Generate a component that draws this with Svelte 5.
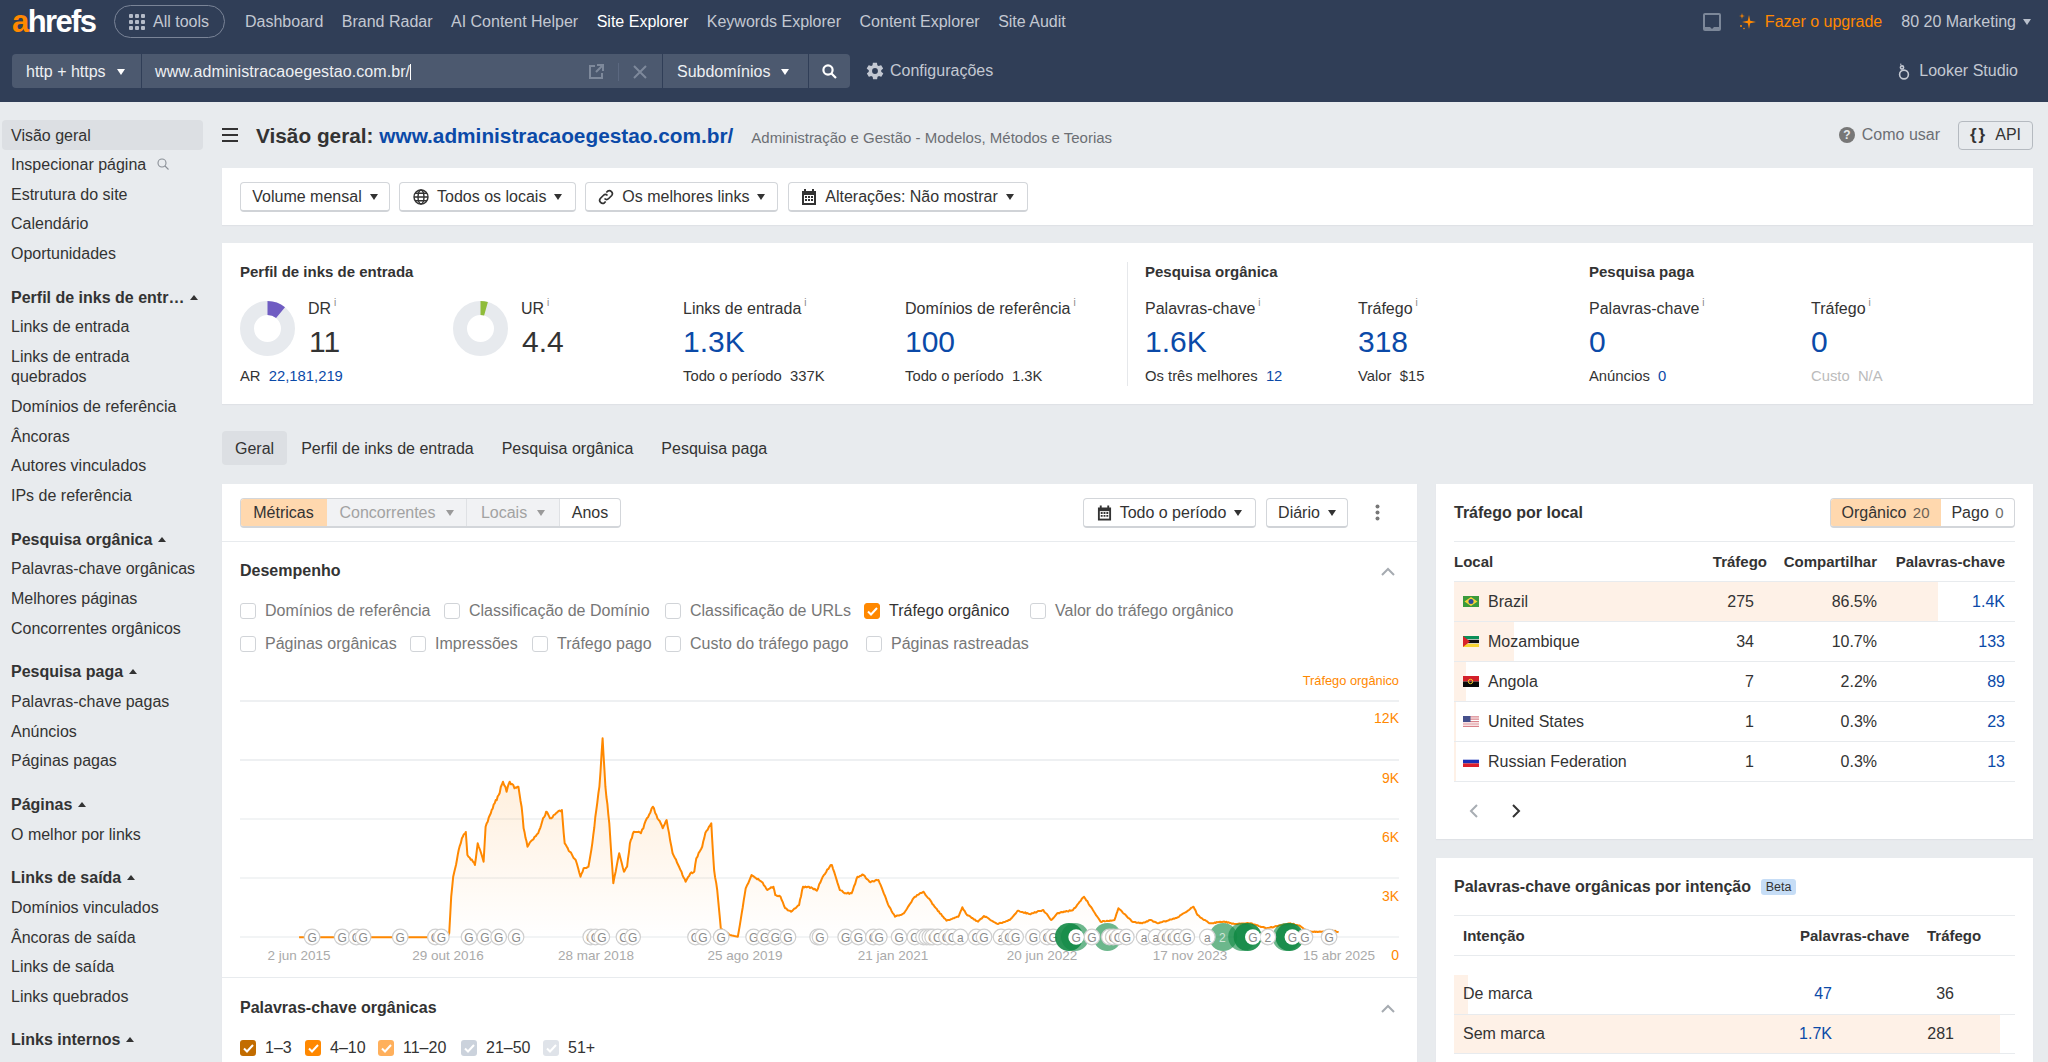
<script>
  const nav = ['Dashboard', 'Brand Radar', 'AI Content Helper', 'Site Explorer', 'Keywords Explorer', 'Content Explorer', 'Site Audit'];

  const sidebar = [
    { items: ['Visão geral', 'Inspecionar página', 'Estrutura do site', 'Calendário', 'Oportunidades'] },
    { head: 'Perfil de inks de entr…', items: ['Links de entrada', 'Links de entrada quebrados', 'Domínios de referência', 'Âncoras', 'Autores vinculados', 'IPs de referência'] },
    { head: 'Pesquisa orgânica', items: ['Palavras-chave orgânicas', 'Melhores páginas', 'Concorrentes orgânicos'] },
    { head: 'Pesquisa paga', items: ['Palavras-chave pagas', 'Anúncios', 'Páginas pagas'] },
    { head: 'Páginas', items: ['O melhor por links'] },
    { head: 'Links de saída', items: ['Domínios vinculados', 'Âncoras de saída', 'Links de saída', 'Links quebrados'] },
    { head: 'Links internos', items: [] }
  ];

  const row1 = [
    { t: 'Domínios de referência', w: 204 },
    { t: 'Classificação de Domínio', w: 221 },
    { t: 'Classificação de URLs', w: 199 },
    { t: 'Tráfego orgânico', w: 166, on: true },
    { t: 'Valor do tráfego orgânico', w: 220 }
  ];
  const row2 = [
    { t: 'Páginas orgânicas', w: 170 },
    { t: 'Impressões', w: 122 },
    { t: 'Tráfego pago', w: 133 },
    { t: 'Custo do tráfego pago', w: 201 },
    { t: 'Páginas rastreadas', w: 170 }
  ];
  const kw = [
    { t: '1–3', c: '#c26c00', w: 65 },
    { t: '4–10', c: '#ff8800', w: 73 },
    { t: '11–20', c: '#ffb05c', w: 83 },
    { t: '21–50', c: '#cbd2dc', w: 82 },
    { t: '51+', c: '#dfe3e9', w: 60 }
  ];

  const places = [
    { n: 'Brazil', f: 'br', tr: '275', s: '86.5%', k: '1.4K', bar: 484 },
    { n: 'Mozambique', f: 'mz', tr: '34', s: '10.7%', k: '133', bar: 60 },
    { n: 'Angola', f: 'ao', tr: '7', s: '2.2%', k: '89', bar: 12 },
    { n: 'United States', f: 'us', tr: '1', s: '0.3%', k: '23', bar: 2 },
    { n: 'Russian Federation', f: 'ru', tr: '1', s: '0.3%', k: '13', bar: 2 }
  ];

  const z7 = [[200,772],[575,772],[580,760],[585,650],[590,590],[597,555],[604,510],[612,475],[622,456],[626,525],[640,545],[645,555],[652,490],[658,510],[667,545],[672,440],[685,400],[695,370],[705,345],[716,305],[725,335],[733,305],[745,325],[755,320],[763,380],[768,445],[778,500],[790,480],[805,460],[815,425],[825,395],[835,415],[850,400],[865,390],[872,490],[885,515],[900,540],[912,590],[920,565],[932,560],[942,490],[952,390],[960,320],[968,175],[975,320],[985,430],[995,610],[1010,520],[1022,575],[1030,560],[1037,490],[1047,455],[1065,460],[1080,415],[1095,380],[1110,420],[1120,445],[1130,420],[1145,520],[1165,570],[1178,605],[1190,580],[1200,575],[1205,535],[1220,500],[1228,458],[1243,430],[1250,570],[1258,630],[1267,745],[1290,765],[1310,770],[1320,700],[1330,625],[1345,585],[1370,605],[1385,630],[1400,620],[1405,645],[1418,650],[1430,685],[1445,695],[1465,675],[1475,620],[1490,620],[1510,632],[1525,590],[1545,555]];
  const z8 = [[30,555],[50,630],[65,640],[80,640],[95,590],[110,585],[125,605],[148,600],[175,680],[190,710],[212,700],[240,650],[262,635],[290,680],[320,722],[350,710],[360,682],[372,705],[400,725],[415,708],[450,732],[480,720],[500,692],[530,702],[565,690],[585,720],[600,700],[640,690],[668,650],[685,680],[710,725],[745,720],[755,685],[790,725],[815,730],[835,720],[855,730],[905,712],[945,680],[955,705],[985,730],[1020,725],[1050,732],[1090,730],[1130,745],[1150,740],[1190,730],[1215,738],[1235,755],[1270,755],[1295,750],[1312,757]];
  const base = [
    ...z7.map(([x, y]) => [220 + x / 2.53, 680 + y / 3]),
    ...z8.map(([x, y]) => [820 + x / 2.53, 680 + y / 3])
  ];

  let seed = 12345;
  const rnd = () => {
    seed = (seed * 1664525 + 1013904223) >>> 0;
    return seed / 4294967296 - 0.5;
  };
  const pts = [];
  for (let i = 0; i < base.length - 1; i++) {
    const [x0, y0] = base[i];
    const [x1, y1] = base[i + 1];
    const n = Math.max(1, Math.round((x1 - x0) / 1.1));
    for (let j = 0; j < n; j++) {
      const t = j / n;
      const y = y0 + (y1 - y0) * t;
      const amp = y > 934 ? 0 : Math.min(3.4, 0.7 + (937 - y) / 60);
      pts.push([x0 + (x1 - x0) * t, y + (j === 0 ? 0 : rnd() * amp)]);
    }
  }
  pts.push(base[base.length - 1]);
  const line = pts.map((p, i) => `${i ? 'L' : 'M'}${p[0].toFixed(1)} ${p[1].toFixed(1)}`).join('');
  const area = `${line}L${pts[pts.length - 1][0].toFixed(1)} 937L${pts[0][0].toFixed(1)} 937Z`;

  const g = (list, off) => list.map((v) => (Array.isArray(v) ? { x: off + v[0] / 2.53, l: v[1] } : { x: off + v / 2.53, l: 'G' }));
  const marks = g([233, 309, 345, 362, 456, 545, 560, 630, 670, 705, 749, 938, 950, 966, 1022, 1044, 1203, 1222, 1268, 1350, 1378, 1405, 1437, 1512], 220);
  const marks2 = g([0, 65, 97, 135, 150, 200, 240, 262, 270, 278, 285, 298, 320, 335, [355, 'a'], 395, 415, [458, 'a'], 478, 495, 540, 575, 590], 820);
  const marksTop = g([688, 732, 742, 755, 775, [820, 'a'], [850, 'a'], 875, 890, 905, 928, [980, 'a'], [1133, '2'], 1227, 1288], 820);
  const greens = [
    [645, 0.62], [630, 0.9], [727, 0.62], [1020, 0.62], [1068, 0.62], [1082, 0.9], [1180, 0.62], [1188, 0.9]
  ].map(([z, o]) => ({ x: 820 + z / 2.53, o }));
  const whites = [[648, 'G'], [1095, 'G'], [1195, 'G']].map(([z, l]) => ({ x: 820 + z / 2.53, l }));
  const onGreen = 820 + 1018 / 2.53;

  const grid = [[701, 2], [760, 2], [819, 1.4], [878, 1.4], [937, 1.4]];
  const yl = [['12K', 723], ['9K', 783], ['6K', 842], ['3K', 901], ['0', 960]];
  const dates = [['2 jun 2015', 299], ['29 out 2016', 448], ['28 mar 2018', 596], ['25 ago 2019', 745], ['21 jan 2021', 893], ['20 jun 2022', 1042], ['17 nov 2023', 1190], ['15 abr 2025', 1339]];
</script>

<div class="page">
  <header class="top">
    <div class="row-a">
      <div class="logo"><span class="a">a</span>hrefs</div>
      <div class="pill">
        <svg width="16" height="16" viewBox="0 0 16 16" fill="#b4bbc8"><rect x="0" y="0" width="4" height="4" rx="1"/><rect x="6" y="0" width="4" height="4" rx="1"/><rect x="12" y="0" width="4" height="4" rx="1"/><rect x="0" y="6" width="4" height="4" rx="1"/><rect x="6" y="6" width="4" height="4" rx="1"/><rect x="12" y="6" width="4" height="4" rx="1"/><rect x="0" y="12" width="4" height="4" rx="1"/><rect x="6" y="12" width="4" height="4" rx="1"/><rect x="12" y="12" width="4" height="4" rx="1"/></svg>
        <span>All tools</span>
      </div>
      <nav class="nav">
        {#each nav as n}
          <span class:active={n === 'Site Explorer'}>{n}</span>
        {/each}
      </nav>
      <div class="right-a">
        <svg width="18" height="18" viewBox="0 0 18 18"><rect x="0" y="0" width="18" height="18" rx="2" fill="#7c8799"/><rect x="2" y="2" width="14" height="12" fill="#303e57"/><path d="M7 14h4l-2 2z" fill="#303e57"/></svg>
        <span class="up">
          <svg width="17" height="17" viewBox="0 0 17 17" fill="#ff8800"><path d="M10 2l1.2 5.8L17 9l-5.8 1.2L10 16l-1.2-5.8L3 9l5.8-1.2z"/><path d="M3 0l.6 2.4L6 3l-2.4.6L3 6l-.6-2.4L0 3l2.4-.6z"/><circle cx="2" cy="13" r="1"/><circle cx="5" cy="15.5" r=".8"/></svg>
          Fazer o upgrade
        </span>
        <span class="acct">80 20 Marketing</span><i class="caret light"></i>
      </div>
    </div>
    <div class="row-b">
      <div class="search">
        <div class="seg s1">http + https <i class="caret white"></i></div>
        <div class="seg s2">
          <span class="url">www.administracaoegestao.com.br/<b class="cur"></b></span>
          <svg class="ext" width="15" height="15" viewBox="0 0 15 15" fill="none" stroke="#7e899b" stroke-width="2"><path d="M6 2H1v12h12V9"/><path d="M8 1h6v6M14 1L7 8"/></svg>
          <i class="sep"></i>
          <svg class="x" width="14" height="14" viewBox="0 0 14 14" stroke="#7e899b" stroke-width="2"><path d="M1 1l12 12M13 1L1 13"/></svg>
        </div>
        <div class="seg s3">Subdomínios <i class="caret white"></i></div>
        <div class="seg s4">
          <svg width="15" height="15" viewBox="0 0 15 15" fill="none" stroke="#fff" stroke-width="2.2"><circle cx="6" cy="6" r="4.6"/><path d="M9.5 9.5L14 14"/></svg>
        </div>
      </div>
      <div class="config">
        <svg width="20" height="20" viewBox="0 0 24 24" fill="#c3c8d2"><path d="M19.4 13c.1-.3.1-.7.1-1s0-.7-.1-1l2.1-1.6c.2-.2.2-.4.1-.6l-2-3.5c-.1-.2-.4-.3-.6-.2l-2.5 1c-.5-.4-1.1-.7-1.7-1l-.4-2.7c0-.2-.2-.4-.5-.4h-4c-.3 0-.5.2-.5.4l-.4 2.7c-.6.3-1.2.6-1.7 1l-2.5-1c-.2-.1-.5 0-.6.2l-2 3.5c-.1.2-.1.4.1.6L4.6 11c-.1.3-.1.7-.1 1s0 .7.1 1l-2.1 1.6c-.2.2-.2.4-.1.6l2 3.5c.1.2.4.3.6.2l2.5-1c.5.4 1.1.7 1.7 1l.4 2.7c0 .2.2.4.5.4h4c.3 0 .5-.2.5-.4l.4-2.7c.6-.3 1.2-.6 1.7-1l2.5 1c.2.1.5 0 .6-.2l2-3.5c.1-.2.1-.4-.1-.6zM12 15.5a3.5 3.5 0 110-7 3.5 3.5 0 010 7z"/></svg>
        <span>Configurações</span>
      </div>
      <div class="looker">
        <svg width="12" height="17" viewBox="0 0 12 17" fill="none" stroke="#c3c8d2" stroke-width="1.6"><circle cx="6" cy="11.5" r="4.4"/><circle cx="4" cy="4.5" r="1.6"/><circle cx="2.8" cy="1.2" r=".7" fill="#c3c8d2" stroke="none"/></svg>
        <span>Looker Studio</span>
      </div>
    </div>
  </header>

  <div class="body">
    <aside class="side">
      {#each sidebar as group}
        <div class="group">
          {#if group.head}
            <div class="side-head"><span>{group.head}</span><i class="caret up-c"></i></div>
          {/if}
          {#each group.items as item}
            <div class="side-item" class:on={item === 'Visão geral'} class:wrap={item === 'Links de entrada quebrados'}>
              {item}
              {#if item === 'Inspecionar página'}
                <svg width="12" height="12" viewBox="0 0 12 12" fill="none" stroke="#8a8f96" stroke-width="1.1"><circle cx="5" cy="5" r="4"/><path d="M8 8l3.5 3.5"/></svg>
              {/if}
            </div>
          {/each}
        </div>
      {/each}
    </aside>

    <main class="main">
      <div class="title-row">
        <svg class="burger" width="16" height="14" viewBox="0 0 16 14" fill="#333"><rect width="16" height="2"/><rect y="6" width="16" height="2"/><rect y="12" width="16" height="2"/></svg>
        <h1>Visão geral: <span>www.administracaoegestao.com.br/</span></h1>
        <span class="subtitle">Administração e Gestão - Modelos, Métodos e Teorias</span>
        <span class="howto">
          <svg width="16" height="16" viewBox="0 0 16 16"><circle cx="8" cy="8" r="8" fill="#777"/><text x="8" y="12" text-anchor="middle" font-size="12" font-weight="700" fill="#e8ebee" font-family="Liberation Sans">?</text></svg>
          Como usar
        </span>
        <span class="api"><b>{'{}'}</b> API</span>
      </div>

      <section class="panel filters">
        <button class="btn w150">Volume mensal <i class="caret"></i></button>
        <button class="btn w177">
          <svg width="16" height="16" viewBox="0 0 16 16" fill="none" stroke="#333" stroke-width="1.4"><circle cx="8" cy="8" r="7"/><ellipse cx="8" cy="8" rx="3" ry="7"/><path d="M1 8h14M2 4.2h12M2 11.8h12"/></svg>
          Todos os locais <i class="caret"></i>
        </button>
        <button class="btn w193">
          <svg width="16" height="16" viewBox="0 0 16 16" fill="none" stroke="#333" stroke-width="1.7"><path d="M6.5 9.5a3 3 0 004.2 0l3-3a3 3 0 00-4.2-4.2L8.3 3.5"/><path d="M9.5 6.5a3 3 0 00-4.2 0l-3 3a3 3 0 004.2 4.2l1.2-1.2"/></svg>
          Os melhores links <i class="caret"></i>
        </button>
        <button class="btn w240">
          <svg width="16" height="16" viewBox="0 0 16 16"><path fill="#333" d="M1 2h2V0h2v2h6V0h2v2h2v14H1z"/><path fill="#fff" d="M3 6h10v8H3z"/><path fill="#333" d="M4 7h2v2H4zM7 7h2v2H7zM10 7h2v2h-2zM4 10h2v2H4zM7 10h2v2H7zM10 10h2v2h-2z"/></svg>
          Alterações: Não mostrar <i class="caret"></i>
        </button>
      </section>

      <section class="panel stats">
        <div class="sec sec1">
          <h3>Perfil de inks de entrada</h3>
          <div class="metrics">
            <div class="m donut-m" style="width:213px">
              <svg class="donut" width="55" height="55" viewBox="0 0 55 55"><circle cx="27.5" cy="27.5" r="20.5" fill="none" stroke="#e7eaee" stroke-width="14"/><circle cx="27.5" cy="27.5" r="20.5" fill="none" stroke="#6f5cc2" stroke-width="14" pathLength="100" stroke-dasharray="11 89" transform="rotate(-90 27.5 27.5)"/></svg>
              <div>
                <div class="lab">DR<sup>i</sup></div>
                <div class="val dark">11</div>
              </div>
              <div class="sub full">AR&nbsp; <a>22,181,219</a></div>
            </div>
            <div class="m donut-m" style="width:230px">
              <svg class="donut" width="55" height="55" viewBox="0 0 55 55"><circle cx="27.5" cy="27.5" r="20.5" fill="none" stroke="#e7eaee" stroke-width="14"/><circle cx="27.5" cy="27.5" r="20.5" fill="none" stroke="#8fbc3a" stroke-width="14" pathLength="100" stroke-dasharray="4.4 95.6" transform="rotate(-90 27.5 27.5)"/></svg>
              <div>
                <div class="lab">UR<sup>i</sup></div>
                <div class="val dark">4.4</div>
              </div>
            </div>
            <div class="m" style="width:222px">
              <div class="lab">Links de entrada<sup>i</sup></div>
              <div class="val">1.3K</div>
              <div class="sub">Todo o período&nbsp; 337K</div>
            </div>
            <div class="m">
              <div class="lab">Domínios de referência<sup>i</sup></div>
              <div class="val">100</div>
              <div class="sub">Todo o período&nbsp; 1.3K</div>
            </div>
          </div>
        </div>
        <div class="sec sec2">
          <h3>Pesquisa orgânica</h3>
          <div class="metrics">
            <div class="m" style="width:213px">
              <div class="lab">Palavras-chave<sup>i</sup></div>
              <div class="val">1.6K</div>
              <div class="sub">Os três melhores&nbsp; <a>12</a></div>
            </div>
            <div class="m">
              <div class="lab">Tráfego<sup>i</sup></div>
              <div class="val">318</div>
              <div class="sub">Valor&nbsp; $15</div>
            </div>
          </div>
        </div>
        <div class="sec sec3">
          <h3>Pesquisa paga</h3>
          <div class="metrics">
            <div class="m" style="width:222px">
              <div class="lab">Palavras-chave<sup>i</sup></div>
              <div class="val">0</div>
              <div class="sub">Anúncios&nbsp; <a>0</a></div>
            </div>
            <div class="m">
              <div class="lab">Tráfego<sup>i</sup></div>
              <div class="val">0</div>
              <div class="sub muted">Custo&nbsp; N/A</div>
            </div>
          </div>
        </div>
      </section>

      <div class="tabs">
        <span class="tab on">Geral</span>
        <span class="tab">Perfil de inks de entrada</span>
        <span class="tab">Pesquisa orgânica</span>
        <span class="tab">Pesquisa paga</span>
      </div>

      <div class="cols">
        <section class="card left">
          <div class="toolbar">
            <div class="segm">
              <span class="chip sel" style="width:86px">Métricas</span>
              <span class="chip dis" style="width:140px">Concorrentes <i class="caret gray"></i></span>
              <span class="chip dis" style="width:93px">Locais <i class="caret gray"></i></span>
              <span class="chip" style="width:60px">Anos</span>
            </div>
            <div class="tool-right">
              <button class="btn t1">
                <svg width="15" height="16" viewBox="0 0 16 16"><path fill="#333" d="M1 2h2V0h2v2h6V0h2v2h2v14H1z"/><path fill="#fff" d="M3 6h10v8H3z"/><path fill="#333" d="M4 7h2v2H4zM7 7h2v2H7zM10 7h2v2h-2zM4 10h2v2H4zM7 10h2v2H7zM10 10h2v2h-2z"/></svg>
                Todo o período <i class="caret"></i>
              </button>
              <button class="btn t2">Diário <i class="caret"></i></button>
              <svg class="dots" width="5" height="17" viewBox="0 0 5 17" fill="#777"><circle cx="2.5" cy="2.5" r="2"/><circle cx="2.5" cy="8.5" r="2"/><circle cx="2.5" cy="14.5" r="2"/></svg>
            </div>
          </div>
          <div class="perf">
            <div class="sect-head">
              <h3 class="big">Desempenho</h3>
              <svg width="14" height="9" viewBox="0 0 14 9" fill="none" stroke="#a6abb1" stroke-width="2"><path d="M1 8l6-6 6 6"/></svg>
            </div>
            <div class="cb-row r1">
              {#each row1 as c}
                <label class="cb" style="width:{c.w}px" class:on={c.on}>
                  <span class="box" class:checked={c.on}>{#if c.on}<svg width="11" height="9" viewBox="0 0 11 9" fill="none" stroke="#fff" stroke-width="2"><path d="M1 4.5l3 3 6-6.5"/></svg>{/if}</span>
                  {c.t}
                </label>
              {/each}
            </div>
            <div class="cb-row r2">
              {#each row2 as c}
                <label class="cb" style="width:{c.w}px">
                  <span class="box"></span>
                  {c.t}
                </label>
              {/each}
            </div>
            <svg class="chart" width="1195" height="310" viewBox="222 668 1195 310">
              <defs>
                <linearGradient id="fade" gradientUnits="userSpaceOnUse" x1="0" y1="735" x2="0" y2="937">
                  <stop offset="0" stop-color="#ff8800" stop-opacity=".17"/>
                  <stop offset="1" stop-color="#ff8800" stop-opacity="0"/>
                </linearGradient>
              </defs>
              <text x="1399" y="685" text-anchor="end" class="ylab small">Tráfego orgânico</text>
              {#each grid as [y, w]}
                <line x1="240" x2="1399" y1={y} y2={y} stroke="#eef0f2" stroke-width={w}/>
              {/each}
              <path d={area} fill="url(#fade)"/>
              <path d={line} fill="none" stroke="#ff8800" stroke-width="2" stroke-linejoin="round"/>
              {#each yl as [t, y]}
                <text x="1399" y={y} text-anchor="end" class="ylab">{t}</text>
              {/each}
              {#each dates as [t, x]}
                <text x={x} y="960" text-anchor="middle" class="dlab">{t}</text>
              {/each}
              {#each [...marks, ...marks2] as m}
                <circle cx={m.x} cy="937" r="7.8" fill="#fff" stroke="#cfcfcf" stroke-width="1.2"/>
                <text x={m.x} y="941.5" text-anchor="middle" class="mk">{m.l}</text>
              {/each}
              {#each greens as c}
                <circle cx={c.x} cy="937" r="14" fill="#128a45" opacity={c.o}/>
              {/each}
              <text x={onGreen} y="941.5" text-anchor="middle" class="mk mk2">2</text>
              {#each marksTop as m}
                <circle cx={m.x} cy="937" r="7.8" fill="#fff" stroke="#cfcfcf" stroke-width="1.2"/>
                <text x={m.x} y="941.5" text-anchor="middle" class="mk">{m.l}</text>
              {/each}
              {#each whites as w}
                <circle cx={w.x} cy="937" r="7.8" fill="#fff"/>
                <text x={w.x} y="941.5" text-anchor="middle" class="mk">{w.l}</text>
              {/each}
            </svg>
          </div>
          <div class="kw-sec">
            <div class="sect-head kwh">
              <h3 class="big">Palavras-chave orgânicas</h3>
              <svg width="14" height="9" viewBox="0 0 14 9" fill="none" stroke="#a6abb1" stroke-width="2"><path d="M1 8l6-6 6 6"/></svg>
            </div>
            <div class="kw-row">
              {#each kw as k}
                <span class="kwi" style="width:{k.w}px">
                  <span class="box fill" style="background:{k.c}"><svg width="11" height="9" viewBox="0 0 11 9" fill="none" stroke="#fff" stroke-width="2"><path d="M1 4.5l3 3 6-6.5"/></svg></span>
                  {k.t}
                </span>
              {/each}
            </div>
          </div>
        </section>

        <div class="right">
          <section class="card places">
            <div class="card-head">
              <h3 class="big">Tráfego por local</h3>
              <div class="segm">
                <span class="chip sel" style="width:110px">Orgânico&nbsp;<em>20</em></span>
                <span class="chip" style="width:73px">Pago&nbsp;<em>0</em></span>
              </div>
            </div>
            <div class="tbl">
              <div class="tr th">
                <span>Local</span>
                <span class="r shift">Tráfego</span>
                <span class="r">Compartilhar</span>
                <span class="r">Palavras-chave</span>
              </div>
              {#each places as p}
                <div class="tr td">
                  <i class="bar" style="width:{p.bar}px"></i>
                  <span class="name">
                    <svg class="flag" width="16" height="11" viewBox="0 0 16 11">
                      {#if p.f === 'br'}
                        <rect width="16" height="11" fill="#3a9a3c"/><path d="M8 1l6.5 4.5L8 10 1.5 5.5z" fill="#f5d33a"/><circle cx="8" cy="5.5" r="2.5" fill="#2a4d9a"/>
                      {:else if p.f === 'mz'}
                        <rect width="16" height="3.4" fill="#0a8f58"/><rect y="3.4" width="16" height="4.2" fill="#111"/><rect y="7.6" width="16" height="3.4" fill="#f7d432"/><rect y="3" width="16" height=".6" fill="#fff"/><rect y="7.4" width="16" height=".6" fill="#fff"/><path d="M0 0l7 5.5L0 11z" fill="#d8232a"/>
                      {:else if p.f === 'ao'}
                        <rect width="16" height="5.5" fill="#d3202a"/><rect y="5.5" width="16" height="5.5" fill="#0a0a0a"/><circle cx="7.5" cy="5.5" r="2.2" fill="none" stroke="#f5cf2e" stroke-width="1"/>
                      {:else if p.f === 'us'}
                        <rect width="16" height="11" fill="#fff"/><path d="M0 .8h16M0 3.2h16M0 5.6h16M0 8h16M0 10.4h16" stroke="#d9828a" stroke-width="1.2"/><rect width="7.5" height="6" fill="#45508c"/>
                      {:else}
                        <rect width="16" height="3.7" fill="#fff"/><rect y="3.7" width="16" height="3.7" fill="#1a2fb5"/><rect y="7.4" width="16" height="3.6" fill="#dc1f2b"/>
                      {/if}
                    </svg>
                    {p.n}
                  </span>
                  <span class="r">{p.tr}</span>
                  <span class="r">{p.s}</span>
                  <span class="r blue">{p.k}</span>
                </div>
              {/each}
            </div>
            <div class="pager">
              <svg width="10" height="14" viewBox="0 0 10 14" fill="none" stroke="#a8adb3" stroke-width="2"><path d="M8 1L2 7l6 6"/></svg>
              <svg width="10" height="14" viewBox="0 0 10 14" fill="none" stroke="#333" stroke-width="2"><path d="M2 1l6 6-6 6"/></svg>
            </div>
          </section>

          <section class="card intent">
            <div class="int-head">
              <h3 class="big">Palavras-chave orgânicas por intenção</h3>
              <span class="beta">Beta</span>
            </div>
            <div class="int-tbl">
              <div class="ir ih"><span>Intenção</span><span class="c1">Palavras-chave</span><span class="c2">Tráfego</span></div>
              <div class="ir id first"><i class="bar" style="width:14px"></i><span>De marca</span><span class="c1 blue">47</span><span class="c2">36</span></div>
              <div class="ir id"><i class="bar" style="width:546px"></i><span>Sem marca</span><span class="c1 blue">1.7K</span><span class="c2">281</span></div>
            </div>
          </section>
        </div>
      </div>
    </main>
  </div>
</div>

<style>
  :global(body) {
    margin: 0;
    background: #e8ebee;
  }
  .page {
    width: 2048px;
    height: 1062px;
    overflow: hidden;
    font-family: "Liberation Sans", Arial, sans-serif;
    font-size: 16px;
    color: #333;
    background: #e8ebee;
  }
  i { font-style: normal; }
  em { font-style: normal; opacity: .72; font-size: 15px; }
  a { color: #0b4aa8; }

  .caret {
    display: inline-block;
    width: 0;
    height: 0;
    border-left: 4.5px solid transparent;
    border-right: 4.5px solid transparent;
    border-top: 6px solid #333;
    margin-left: 4px;
    vertical-align: 2px;
  }
  .caret.white { border-top-color: #fff; }
  .caret.light { border-top-color: #b9c0cc; margin-left: 7px; }
  .caret.gray { border-top-color: #9a9a9a; }
  .caret.up-c {
    border-top: 0;
    border-bottom: 5px solid #333;
    margin-left: 6px;
    vertical-align: 3px;
  }

  /* header */
  .top {
    height: 102px;
    background: #303e57;
    color: #c3c8d2;
    box-sizing: border-box;
  }
  .row-a {
    display: flex;
    align-items: center;
    height: 43px;
    padding-left: 12px;
  }
  .logo {
    width: 83px;
    font-size: 31px;
    font-weight: 700;
    letter-spacing: -1.6px;
    color: #fff;
    line-height: 40px;
  }
  .logo .a { color: #ff8800; }
  .pill {
    display: flex;
    align-items: center;
    gap: 8px;
    width: 111px;
    height: 33px;
    box-sizing: border-box;
    margin-left: 19px;
    padding-left: 14px;
    border: 1px solid #7a8497;
    border-radius: 17px;
  }
  .nav {
    display: flex;
    gap: 18.5px;
    margin-left: 20px;
  }
  .nav .active { color: #fff; }
  .right-a {
    display: flex;
    align-items: center;
    margin-left: auto;
    padding-right: 17px;
  }
  .up {
    display: flex;
    align-items: center;
    gap: 9px;
    color: #ff8800;
    margin-left: 18px;
  }
  .acct { margin-left: 19px; }
  .row-b {
    display: flex;
    align-items: center;
    margin-top: 11px;
    padding-left: 12px;
    padding-right: 30px;
  }
  .search {
    display: flex;
    gap: 1px;
    height: 34px;
    width: 838px;
    border-radius: 4px;
    overflow: hidden;
  }
  .seg {
    display: flex;
    align-items: center;
    background: #4c596f;
    color: #eef0f3;
    box-sizing: border-box;
    padding-top: 1px;
  }
  .s1 { width: 129px; padding-left: 14px; gap: 2px; }
  .s1 .caret { margin-left: 9px; }
  .s3 .caret { margin-left: 11px; }
  .s2 { width: 520px; padding-left: 13px; }
  .url { flex: 1; display: flex; align-items: center; letter-spacing: .08px; }
  .cur { display: inline-block; width: 1px; height: 16px; background: #fff; }
  .sep { width: 1px; height: 18px; background: #5b6880; margin: 0 14px; }
  .x { margin-right: 15px; }
  .s3 { width: 145px; padding-left: 14px; }
  .s4 { flex: 1; justify-content: center; }
  .config {
    display: flex;
    align-items: center;
    gap: 5px;
    margin-left: 15px;
  }
  .looker {
    display: flex;
    align-items: center;
    gap: 9px;
    margin-left: auto;
  }

  /* layout */
  .body {
    display: grid;
    grid-template-columns: 222px 1811px;
  }
  .side {
    padding: 18px 0 0 2px;
  }
  .group + .group { margin-top: 14px; }
  .side-item, .side-head {
    padding: 5.5px 9px 3.9px;
    line-height: 20.27px;
    width: 201px;
    box-sizing: border-box;
    white-space: nowrap;
  }
  .side-item.wrap { white-space: normal; }
  .side-item.on {
    background: #dcdfe3;
    border-radius: 4px;
  }
  .side-item svg { margin-left: 6px; vertical-align: 0; }
  .side-head {
    font-weight: 700;
  }

  .title-row {
    display: flex;
    align-items: center;
    height: 30px;
    margin-top: 18px;
    margin-bottom: 18px;
  }
  .burger { flex: none; }
  h1 {
    margin: 2px 0 0 18px;
    font-size: 20.8px;
    font-weight: 700;
    white-space: nowrap;
  }
  h1 span { color: #0b4aa8; }
  .subtitle {
    margin-left: 18px;
    margin-top: 5px;
    font-size: 15px;
    color: #6c6f74;
  }
  .howto {
    display: flex;
    align-items: center;
    gap: 7px;
    margin-left: auto;
    color: #6c6f74;
  }
  .api {
    width: 75px;
    height: 29px;
    box-sizing: border-box;
    margin-left: 18px;
    border: 1px solid #b5bac0;
    border-radius: 4px;
    display: flex;
    align-items: center;
    justify-content: center;
    gap: 8px;
  }
  .api b { font-size: 17px; letter-spacing: 2px; }

  .panel {
    background: #fff;
    box-shadow: 0 1px 1px #dfe2e6;
  }
  .filters {
    display: flex;
    gap: 9.2px;
    align-items: center;
    height: 57px;
    padding-left: 18px;
    margin-bottom: 18px;
  }
  .btn {
    display: inline-flex;
    align-items: center;
    justify-content: center;
    gap: 8px;
    height: 30px;
    padding: 1px 0 0;
    background: #fff;
    border: 1px solid #d3d6da;
    border-bottom: 2px solid #d0d3d7;
    border-radius: 4px;
    font: inherit;
    color: #333;
    box-sizing: border-box;
  }
  .btn .caret { margin-left: 0; }
  .w150 { width: 150px; }
  .w177 { width: 177px; }
  .w193 { width: 193px; }
  .w240 { width: 240px; }

  .stats {
    display: grid;
    grid-template-columns: 888px 461px 1fr;
    height: 161px;
    padding: 19px 0 18px 18px;
    box-sizing: border-box;
  }
  .sec { box-sizing: border-box; }
  .sec1 { border-right: 1px solid #e6e8eb; }
  .sec2 { padding-left: 17px; }
  h3 {
    margin: 0;
    font-size: 15px;
    line-height: 20px;
    font-weight: 700;
    white-space: nowrap;
  }
  h3.big { font-size: 16px; }
  .metrics {
    display: flex;
    margin-top: 17px;
  }
  .m { box-sizing: border-box; }
  .donut-m {
    display: grid;
    grid-template-columns: 69px 1fr;
    align-content: start;
  }
  .donut { margin-top: 2px; }
  .full { grid-column: 1 / 3; }
  .lab {
    line-height: 20px;
    white-space: nowrap;
  }
  .donut-m .lab { margin-left: -1px; }
  sup {
    font-size: 10px;
    color: #888;
    line-height: 0;
    margin-left: 3px;
    vertical-align: 8px;
  }
  .val {
    font-size: 30px;
    line-height: 36px;
    margin-top: 5px;
    color: #0b4aa8;
  }
  .val.dark { color: #333; }
  .sub {
    font-size: 14.8px;
    line-height: 20px;
    margin-top: 6px;
    white-space: nowrap;
  }
  .muted { color: #bbb; }

  .tabs {
    display: flex;
    margin-top: 27px;
    height: 34px;
    margin-bottom: 19px;
    line-height: 36px;
  }
  .tab { padding: 0 14px; }
  .tab.on {
    background: #dcdfe3;
    border-radius: 4px;
    padding: 0 13px;
  }

  .cols {
    display: grid;
    grid-template-columns: 1195px 597px;
    gap: 19px;
  }
  .card {
    background: #fff;
    box-shadow: 0 1px 1px #dfe2e6;
  }
  .left { height: 700px; }
  .toolbar {
    display: flex;
    align-items: center;
    justify-content: space-between;
    height: 58px;
    padding: 0 37px 0 18px;
    box-sizing: border-box;
    border-bottom: 1px solid #e8ebee;
  }
  .tool-right {
    display: flex;
    align-items: center;
    gap: 10px;
  }
  .t1 { width: 173px; }
  .t2 { width: 82px; }
  .dots { margin-left: 17px; }
  .segm {
    display: flex;
    height: 30px;
    box-sizing: border-box;
    border: 1px solid #d3d6da;
    border-bottom-width: 2px;
    border-radius: 4px;
    overflow: hidden;
  }
  .chip {
    display: flex;
    align-items: center;
    justify-content: center;
    gap: 2px;
    padding-top: 1px;
    box-sizing: border-box;
    border-right: 1px solid #dfe1e4;
    white-space: nowrap;
  }
  .chip:last-child { border-right: 0; }
  .chip .caret { margin-left: 8px; }
  .sel { background: #ffd8ae; border-right-color: #ffd8ae; }
  .dis { background: #f1f2f4; color: #a2a2a2; }

  .perf {
    height: 436px;
    box-sizing: border-box;
    border-bottom: 1.5px solid #e8ebee;
  }
  .sect-head {
    display: flex;
    align-items: center;
    justify-content: space-between;
    height: 20px;
    padding: 19px 22px 0 18px;
  }
  .cb-row {
    display: flex;
    padding-left: 18px;
    margin-top: 20px;
  }
  .cb-row.r2 { margin-top: 13px; }
  .cb {
    display: flex;
    align-items: center;
    gap: 9px;
    color: #777;
    height: 20px;
    white-space: nowrap;
    flex: none;
  }
  .cb.on { color: #333; }
  .box {
    display: inline-flex;
    align-items: center;
    justify-content: center;
    width: 16px;
    height: 16px;
    box-sizing: border-box;
    border: 1px solid #d1d4d8;
    border-radius: 3px;
    flex: none;
  }
  .box.checked { background: #ff8800; border-color: #ff8800; }
  .box.fill { border: 0; }
  .chart {
    display: block;
    margin-top: 14px;
  }
  .ylab {
    font: 14px "Liberation Sans", Arial, sans-serif;
    fill: #ff8800;
  }
  .ylab.small { font-size: 12.8px; }
  .dlab {
    font: 13.5px "Liberation Sans", Arial, sans-serif;
    fill: #aaa;
  }
  .mk {
    font: 12px "Liberation Sans", Arial, sans-serif;
    fill: #8b8b8b;
  }
  .mk2 { fill: #cfe5d8; }
  .kwh { padding-top: 20px; }
  .kw-row {
    display: flex;
    margin-top: 20px;
    padding-left: 18px;
  }
  .kwi {
    display: flex;
    align-items: center;
    gap: 9px;
    height: 20px;
    flex: none;
  }

  .places {
    height: 355px;
    padding: 0 18px;
    box-sizing: border-box;
  }
  .card-head {
    display: flex;
    align-items: center;
    justify-content: space-between;
    height: 57px;
    border-bottom: 1px solid #e8ebee;
  }
  .tr {
    display: grid;
    grid-template-columns: 1fr 90px 123px 128px;
    align-items: center;
    height: 40px;
    padding-right: 10px;
    border-bottom: 1px solid #e8ebee;
    box-sizing: border-box;
    position: relative;
  }
  .tr.th { height: 40px; font-weight: 700; font-size: 15px; border-bottom: 1px solid #e8ebee; }
  .r { text-align: right; position: relative; }
  .th .shift { margin-right: -13px; }
  .th .r { white-space: nowrap; }
  .bar {
    position: absolute;
    left: 0;
    top: 0;
    bottom: 0;
    background: #fef1e7;
  }
  .name {
    position: relative;
    display: flex;
    align-items: center;
    gap: 9px;
    padding-left: 9px;
  }
  .blue { color: #0b4aa8; }
  .pager {
    display: flex;
    gap: 32px;
    padding: 22px 0 0 15px;
  }
  .intent {
    margin-top: 19px;
    padding: 0 18px;
    height: 300px;
  }
  .int-head {
    display: flex;
    align-items: center;
    gap: 10px;
    height: 57px;
    border-bottom: 1px solid #e8ebee;
  }
  .beta {
    width: 35px;
    height: 16px;
    line-height: 16px;
    text-align: center;
    background: #c6ddf6;
    border-radius: 3px;
    font-size: 12.5px;
  }
  .ir {
    display: grid;
    grid-template-columns: 1fr 60px 183px;
    position: relative;
    align-items: center;
    padding-left: 9px;
    box-sizing: border-box;
    height: 39.5px;
  }
  .ir span { position: relative; }
  .ih {
    font-weight: 700;
    font-size: 15px;
    border-bottom: 1px solid #e8ebee;
    grid-template-columns: 1fr 127px 88px;
    height: 40px;
  }
  .id { border-bottom: 1px solid #e8ebee; }
  .id.first { margin-top: 19px; }
  .id .c1 { text-align: right; }
  .id .c2 { text-align: right; padding-right: 61px; }
</style>
